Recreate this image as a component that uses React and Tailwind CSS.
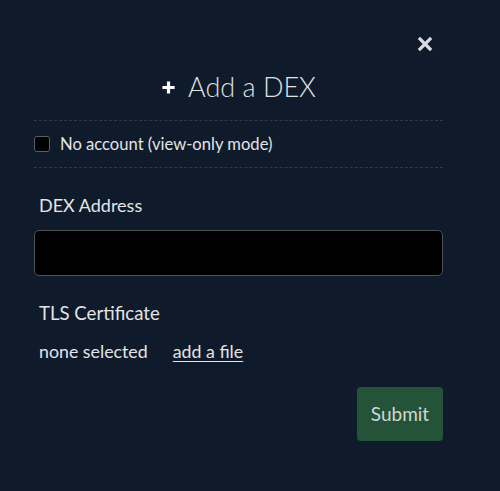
import React from 'react';

function App() {
  return (
    <div
      className="w-[500px] h-[491px] bg-[#0f1b2a] text-[#e2e4e6] relative"
      style={{ fontFamily: '"Lato", "Noto Sans", sans-serif' }}
    >
      <button className="absolute right-[67px] top-[36px] text-[#d8dadd]">
        <svg width="16" height="16" viewBox="0 0 16 16">
          <path d="M3 3 L13 13 M13 3 L3 13" stroke="currentColor" strokeWidth="3.2" strokeLinecap="square" />
        </svg>
      </button>

      <div className="pl-[34px] pr-[57px] pt-[69px]">
        <div className="flex items-center justify-center gap-[12px] pb-[15px] border-b border-dashed border-[#2c3a4a]">
          <svg width="15" height="15" viewBox="0 0 16 16" className="text-white">
            <path d="M8 1.5 V14.5 M1.5 8 H14.5" stroke="currentColor" strokeWidth="3.4" />
          </svg>
          <span className="text-[27px] font-light leading-[36px] text-[#dfe1e3]">Add a DEX</span>
        </div>

        <label className="flex items-center gap-[10px] py-[14px] border-b border-dashed border-[#2c3a4a]">
          <span className="w-[16px] h-[16px] rounded-[3px] border border-[#5a6068] bg-black"></span>
          <span className="text-[16.6px] leading-[18px]">No account (view-only mode)</span>
        </label>

        <div className="pt-[26px] pl-[5px] text-[18px] leading-[22px]">DEX Address</div>
        <div className="mt-[14px] h-[46px] rounded-[5px] border border-[#4e5156] bg-black"></div>

        <div className="pt-[26px] pl-[5px] text-[18.6px] leading-[22px]">TLS Certificate</div>
        <div className="mt-[16px] pl-[5px] flex items-center text-[17.8px] leading-[22px]">
          <span>none selected</span>
          <span className="ml-[25px] underline underline-offset-[3px]">add a file</span>
        </div>

        <div className="flex justify-end mt-[25px]">
          <button className="w-[86px] h-[54px] rounded-[4px] bg-[#245339] text-[19px] text-[#cfd8d2]">
            Submit
          </button>
        </div>
      </div>
    </div>
  );
}

export default App;
